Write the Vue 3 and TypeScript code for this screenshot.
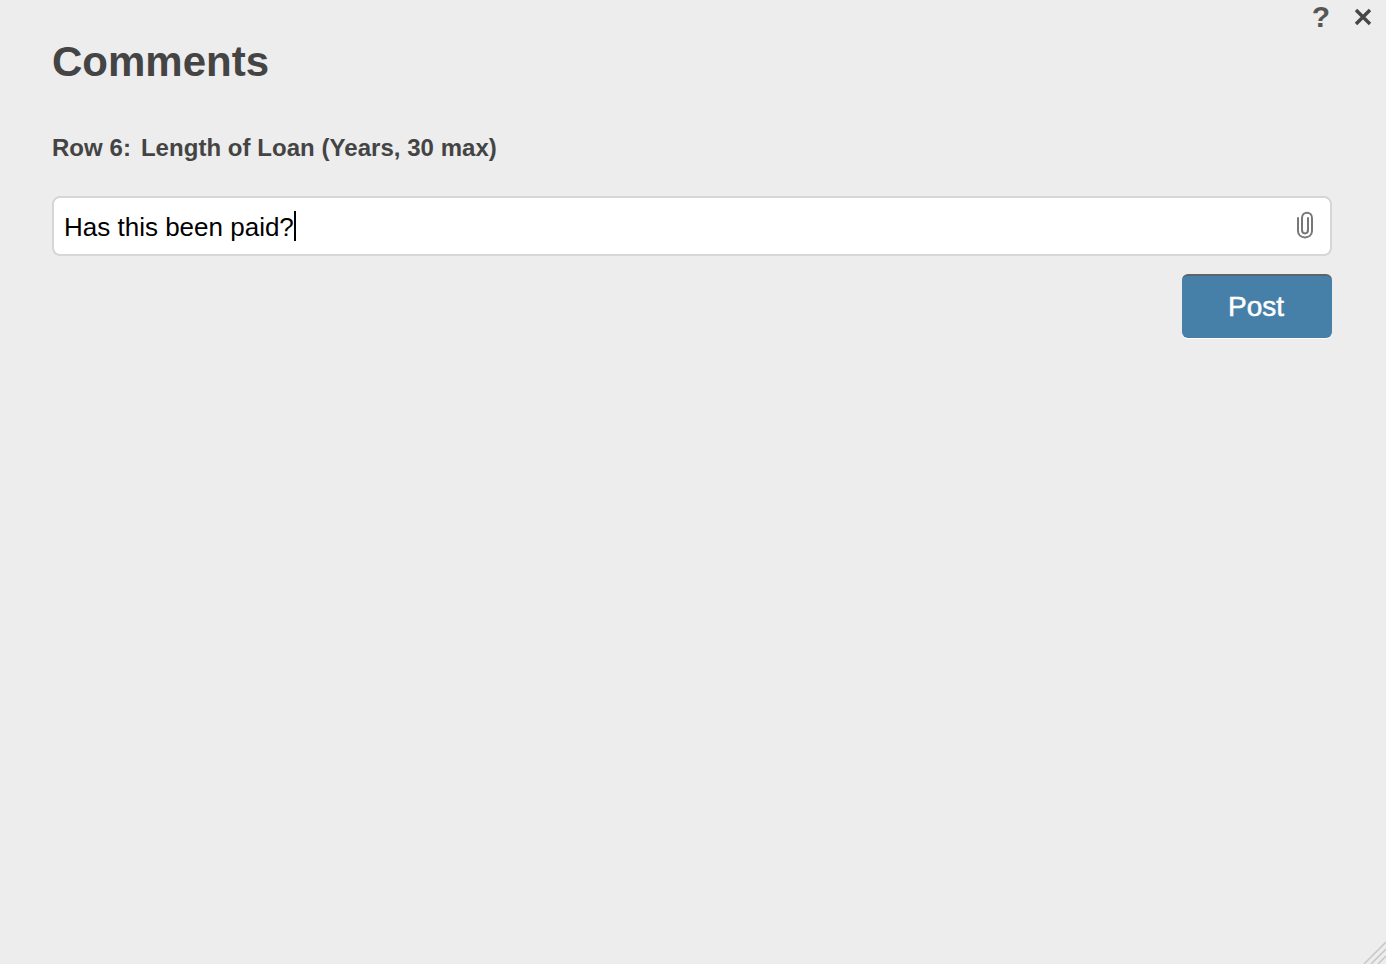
<script setup lang="ts">
const rowLabel = 'Row 6:'
const rowName = 'Length of Loan (Years, 30 max)'
</script>

<template>
  <div class="dialog">
    <div class="top-icons">
      <span class="help">?</span>
      <svg class="close" width="20" height="20" viewBox="0 0 20 20">
        <path d="M3 3 L17 17 M17 3 L3 17" stroke="#474747" stroke-width="3.4" fill="none" />
      </svg>
    </div>
    <h1>Comments</h1>
    <div class="row-title">
      <span>{{ rowLabel }}</span>
      <span>{{ rowName }}</span>
    </div>
    <div class="input-box">
      <span class="typed">Has this been paid?</span>
      <span class="caret"></span>
      <svg class="clip" width="18" height="28" viewBox="0 0 18 28">
        <path
          d="M2 7 V20 C2 28.5 16 28.5 16 20 V7 C16 0 6 0 6 7 V19 C6 23.5 12 23.5 12 19 V7"
          stroke="#777"
          stroke-width="2"
          fill="none"
          stroke-linecap="round"
        />
      </svg>
    </div>
    <div class="actions">
      <button class="post">Post</button>
    </div>
    <svg class="grip" width="24" height="24" viewBox="0 0 24 24">
      <path d="M2 24 L24 2 M9 24 L24 9 M16 24 L24 16" stroke="#c9c9c9" stroke-width="1.6" fill="none" />
    </svg>
  </div>
</template>

<style>
html,
body {
  margin: 0;
  background: #ededed;
}
</style>

<style scoped>
.dialog {
  position: relative;
  box-sizing: border-box;
  height: 964px;
  padding: 37px 54px 0 52px;
  background: #ededed;
  font-family: 'Liberation Sans', Arial, sans-serif;
  overflow: hidden;
}
.top-icons {
  position: absolute;
  top: 0;
  right: 13px;
  display: flex;
  align-items: flex-start;
  gap: 23px;
}
.help {
  font-size: 30px;
  font-weight: 700;
  color: #555;
  line-height: 33px;
}
.close {
  display: block;
  margin-top: 7px;
}
h1 {
  margin: 0;
  font-size: 42px;
  line-height: 50px;
  font-weight: 700;
  color: #444;
}
.row-title {
  display: flex;
  gap: 10px;
  margin-top: 46px;
  font-size: 24px;
  line-height: 30px;
  font-weight: 700;
  letter-spacing: 0.04px;
  color: #444;
}
.input-box {
  display: flex;
  align-items: center;
  box-sizing: border-box;
  height: 60px;
  margin-top: 33px;
  padding: 0 16px 0 10px;
  background: #fff;
  border: 2px solid #d6d6d6;
  border-radius: 8px;
}
.typed {
  padding-top: 2px;
  font-size: 26px;
  color: #000;
}
.caret {
  width: 2px;
  height: 30px;
  background: #000;
}
.clip {
  margin-left: auto;
  margin-top: -2px;
}
.actions {
  display: flex;
  justify-content: flex-end;
  margin-top: 18px;
}
.post {
  width: 150px;
  height: 64px;
  padding: 0 2px 0 0;
  border: none;
  border-top: 2px solid #5c6468;
  border-radius: 6px;
  background: #4680a8;
  box-shadow: 0 1px 0 #fff;
  color: #fff;
  font-family: inherit;
  font-size: 28px;
  -webkit-text-stroke: 0.5px #fff;
}
.grip {
  position: absolute;
  right: 0;
  bottom: 0;
}
</style>
